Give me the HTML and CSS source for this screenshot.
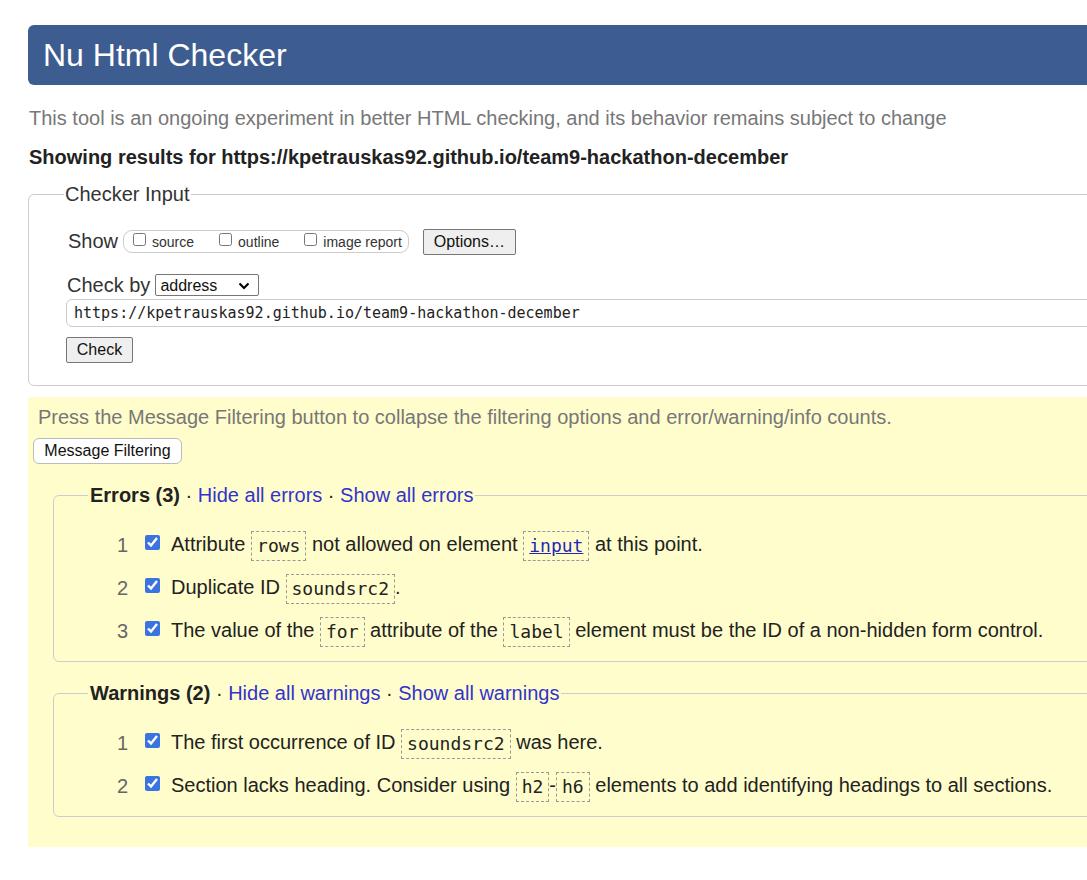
FILE: index.html
```html
<!DOCTYPE html>
<html lang="en">
<head>
<meta charset="utf-8">
<title>Nu Html Checker</title>
<link rel="stylesheet" href="styles.css">
</head>
<body>
<div class="page">
  <h1 class="banner">Nu Html Checker</h1>
  <p class="intro">This tool is an ongoing experiment in better HTML checking, and its behavior remains subject to change</p>
  <p class="showing">Showing results for https://kpetrauskas92.github.io/team9-hackathon-december</p>

  <form class="checker-form">
    <fieldset class="checker">
      <legend>Checker Input</legend>
      <div class="ci-body">
        <div class="show-row">
          <span class="lbl">Show</span>
          <span class="opts">
            <label class="opt"><input type="checkbox"> source</label>
            <label class="opt"><input type="checkbox"> outline</label>
            <label class="opt last"><input type="checkbox"> image report</label>
          </span>
          <button type="button" class="btn options-btn">Options…</button>
        </div>
        <div class="by-row">
          <span class="lbl">Check by</span>
          <span class="select-wrap">
            <select class="select"><option>address</option></select>
            <svg class="chev" width="12" height="8" viewBox="0 0 12 8"><path d="M1.5 1.5 L6 6 L10.5 1.5" fill="none" stroke="#000" stroke-width="2"/></svg>
          </span>
        </div>
        <input class="url" type="text" value="https://kpetrauskas92.github.io/team9-hackathon-december">
        <button type="button" class="btn check-btn">Check</button>
      </div>
    </fieldset>
  </form>

  <div class="results">
    <p class="press">Press the Message Filtering button to collapse the filtering options and error/warning/info counts.</p>
    <button type="button" class="filter-btn">Message Filtering</button>

    <fieldset class="group">
      <legend><b>Errors (3)</b> · <a href="#" class="lnk">Hide all errors</a> · <a href="#" class="lnk">Show all errors</a></legend>
      <ol class="msgs">
        <li><span class="num">1</span><input type="checkbox" class="chk" checked><span class="txt">Attribute <code class="code">rows</code> not allowed on element <code class="code"><a href="#" class="code-link">input</a></code> at this point.</span></li>
        <li><span class="num">2</span><input type="checkbox" class="chk" checked><span class="txt">Duplicate ID <code class="code">soundsrc2</code>.</span></li>
        <li><span class="num">3</span><input type="checkbox" class="chk" checked><span class="txt">The value of the <code class="code">for</code> attribute of the <code class="code">label</code> element must be the ID of a non-hidden form control.</span></li>
      </ol>
    </fieldset>

    <fieldset class="group">
      <legend><b>Warnings (2)</b> · <a href="#" class="lnk">Hide all warnings</a> · <a href="#" class="lnk">Show all warnings</a></legend>
      <ol class="msgs">
        <li><span class="num">1</span><input type="checkbox" class="chk" checked><span class="txt">The first occurrence of ID <code class="code">soundsrc2</code> was here.</span></li>
        <li><span class="num">2</span><input type="checkbox" class="chk" checked><span class="txt">Section lacks heading. Consider using <code class="code">h2</code>-<code class="code">h6</code> elements to add identifying headings to all sections.</span></li>
      </ol>
    </fieldset>
  </div>
</div>
</body>
</html>
```

FILE: styles.css
```css
html, body {
  overflow: hidden;
}
body {
  margin: 0;
  font-family: "Liberation Sans", Arial, sans-serif;
  color: #222;
  background: #fff;
}
.page {
  width: 1130px;
  padding: 25px 0 0 28px;
}
.banner {
  margin: 0;
  height: 60px;
  line-height: 60px;
  padding-left: 15px;
  background: #3d5c8f;
  color: #fff;
  font-size: 32px;
  font-weight: normal;
  border-radius: 6px 0 0 6px;
}
.intro {
  margin: 21px 0 0 1px;
  font-size: 20px;
  line-height: 24px;
  color: #777;
}
.showing {
  margin: 15px 0 0 1px;
  font-size: 20px;
  line-height: 24px;
  font-weight: bold;
  color: #222;
}
.checker-form {
  margin: 13px 0 0;
}
.checker {
  margin: 0;
  border: 1px solid #ccc;
  border-radius: 6px;
  padding: 0 0 22px 35px;
}
.checker legend {
  font-size: 20px;
  line-height: 24px;
  padding: 0 1px;
  color: #333;
}
.ci-body {
  padding-left: 3px;
}
.show-row {
  display: flex;
  align-items: center;
  margin-top: 23px;
  height: 25px;
}
.lbl {
  font-size: 20px;
  color: #333;
}
.show-row .lbl {
  margin-left: 1px;
}
.opts {
  display: inline-flex;
  align-items: center;
  height: 21px;
  margin-left: 5px;
  padding: 0 6px 0 9px;
  border: 1px solid #ccc;
  border-radius: 9px;
  font-size: 14px;
  color: #333;
}
.opt {
  display: inline-flex;
  align-items: center;
  margin-right: 25px;
}
.opt.last {
  margin-right: 0;
}
.opt input {
  width: 13px;
  height: 13px;
  margin: -4px 6px 0 0;
}
.btn {
  font-family: "Liberation Sans", Arial, sans-serif;
  font-size: 16px;
  color: #111;
  background: #efefef;
  border: 1px solid #767676;
  border-radius: 2px;
  height: 26px;
  padding: 0 8px;
}
.options-btn {
  margin-left: 14px;
  width: 93px;
}
.by-row {
  display: flex;
  align-items: center;
  margin-top: 20px;
  height: 22px;
}
.select-wrap {
  position: relative;
  display: inline-block;
  margin-left: 5px;
}
.select {
  appearance: none;
  -webkit-appearance: none;
  width: 104px;
  height: 22px;
  padding: 0 0 0 4px;
  font-family: "Liberation Sans", Arial, sans-serif;
  font-size: 16px;
  color: #111;
  background: #fff;
  border: 1px solid #767676;
  border-radius: 2px;
}
.chev {
  position: absolute;
  right: 9px;
  top: 8px;
  pointer-events: none;
}
.url {
  display: block;
  margin: 3px 0 0 -1px;
  width: 1060px;
  height: 28px;
  box-sizing: border-box;
  padding: 0 7px;
  font-family: "DejaVu Sans Mono", monospace;
  font-size: 15px;
  color: #222;
  border: 1px solid #ccc;
  border-radius: 6px;
}
.check-btn {
  display: block;
  margin: 10px 0 0 -1px;
  width: 67px;
}
.results {
  margin-top: 11px;
  background: #fffdcc;
  padding: 9px 0 30px 0;
}
.press {
  margin: 0 0 0 10px;
  font-size: 20px;
  line-height: 22px;
  color: #777;
}
.filter-btn {
  display: block;
  margin: 10px 0 0 5px;
  width: 149px;
  height: 26px;
  font-family: "Liberation Sans", Arial, sans-serif;
  font-size: 16px;
  color: #111;
  background: #fff;
  border: 1px solid #bbb;
  border-radius: 6px;
  padding: 0;
}
.group {
  margin: 19px 0 0 25px;
  border: 1px solid #ccc;
  border-radius: 6px;
  padding: 0 0 15px 34px;
}
.group legend {
  font-size: 20px;
  line-height: 24px;
  padding: 0 2px;
  color: #222;
}
.lnk {
  color: #3333cc;
  text-decoration: none;
}
.msgs {
  list-style: none;
  margin: 23px 0 0;
  padding: 0;
}
.msgs li {
  display: flex;
  align-items: center;
  height: 30px;
  margin-bottom: 13px;
  font-size: 20px;
  line-height: 30px;
}
.msgs li:last-child {
  margin-bottom: 0;
}
.num {
  width: 40px;
  text-align: right;
  color: #666;
}
.chk {
  width: 15px;
  height: 15px;
  margin: -6px 11px 0 17px;
  accent-color: #3a74e0;
}
.txt {
  white-space: nowrap;
  color: #222;
}
.code {
  display: inline-block;
  font-family: "DejaVu Sans Mono", monospace;
  font-size: 18px;
  line-height: 28px;
  padding: 0 5px;
  border: 1px dashed #999;
  vertical-align: middle;
  color: #222;
}
.code-link {
  color: #2626b8;
  text-decoration: underline;
}
```
